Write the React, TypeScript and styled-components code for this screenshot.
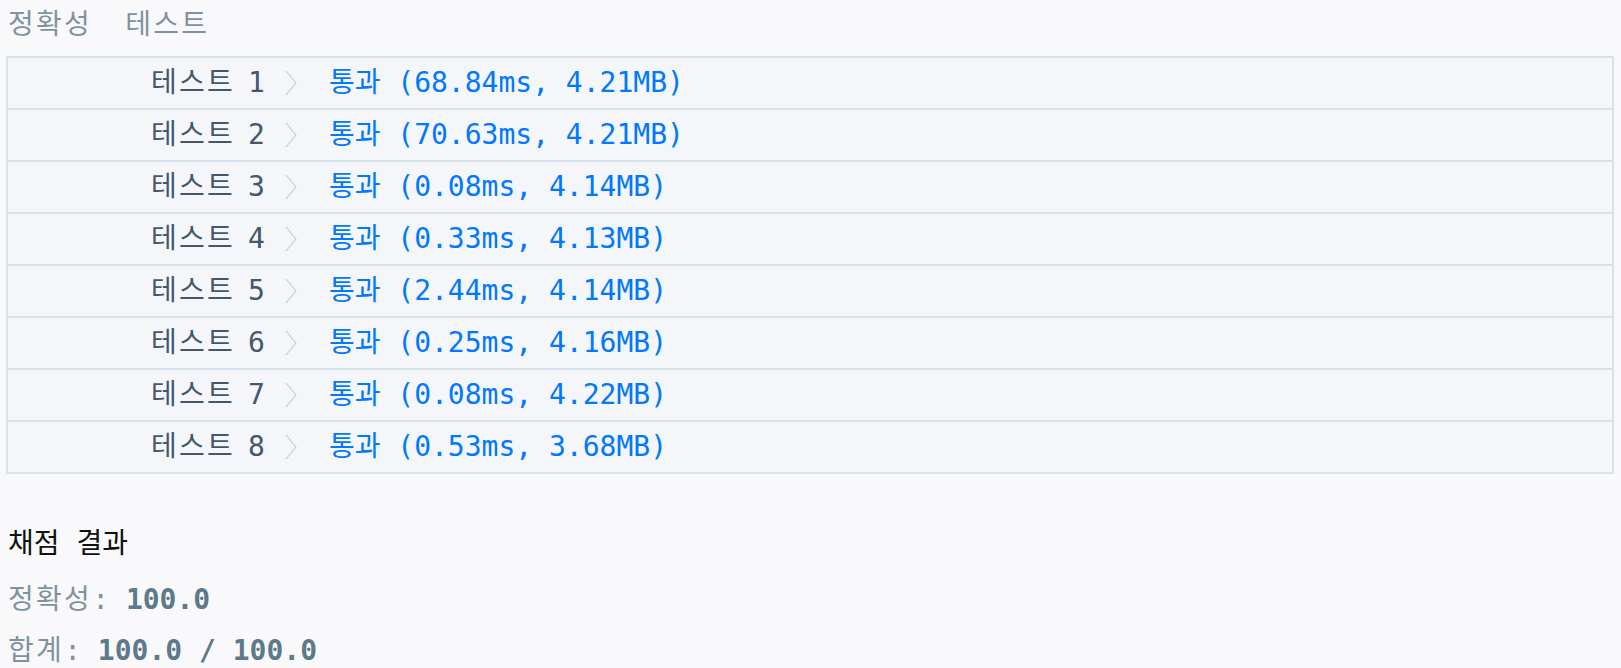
import React from "react";
import styled, { createGlobalStyle } from "styled-components";

const GlobalStyle = createGlobalStyle`
  html, body {
    margin: 0;
    padding: 0;
    background: #f9f9fc;
  }
  body {
    font-family: "DejaVu Sans Mono", "Noto Sans CJK KR", monospace;
  }
`;

const Page = styled.div`
  padding: 0 7px 0 6px;
  font-size: 28px;
`;

const Tabs = styled.div`
  display: flex;
  align-items: center;
  gap: 33px;
  height: 50px;
  padding-left: 2px;
  margin-bottom: 6px;
`;

const Tab = styled.span`
  color: #7f939f;
  line-height: 1;
  letter-spacing: 2.3px;
`;

const Table = styled.div`
  border: 2px solid #d7e2eb;
  border-bottom: none;
  background: #f5f6fa;
`;

const Row = styled.div`
  display: flex;
  align-items: center;
  box-sizing: border-box;
  height: 52px;
  padding: 0 0 1px 143px;
  border-bottom: 2px solid #d7e2eb;
`;

const TestName = styled.span`
  color: #44576c;
  white-space: pre;
  line-height: 1;
`;

const Spaced = styled.span<{ $tight?: boolean }>`
  letter-spacing: 2.3px;
  margin-right: ${(p) => (p.$tight ? "-4px" : "0")};
`;

const Chevron = styled.svg`
  display: block;
  margin: 0 32px 0 20px;
  flex: none;
`;

const Result = styled.span`
  color: #0078ff;
  white-space: pre;
  line-height: 1;
`;

const Summary = styled.div`
  padding: 52px 2px 0 2px;
`;

const Heading = styled.div`
  color: #111;
  height: 36px;
  line-height: 36px;
  margin-bottom: 13px;
  white-space: pre;
`;

const Line = styled.div`
  height: 51px;
  line-height: 50px;
  color: #7f939f;
  white-space: pre;
`;

const Num = styled.span`
  color: #5d7a8a;
  font-weight: bold;
`;

const tests = [
  "(68.84ms, 4.21MB)",
  "(70.63ms, 4.21MB)",
  "(0.08ms, 4.14MB)",
  "(0.33ms, 4.13MB)",
  "(2.44ms, 4.14MB)",
  "(0.25ms, 4.16MB)",
  "(0.08ms, 4.22MB)",
  "(0.53ms, 3.68MB)",
];

export default function App() {
  return (
    <>
      <GlobalStyle />
      <Page>
        <Tabs>
          <Tab>정확성</Tab>
          <Tab>테스트</Tab>
        </Tabs>
        <Table>
          {tests.map((t, i) => (
            <Row key={i}>
              <TestName>
                <Spaced $tight>테스트</Spaced> {i + 1}
              </TestName>
              <Chevron width="12" height="26" viewBox="0 0 12 26">
                <polyline points="1,1 11,13 1,25" fill="none" stroke="#cdd3da" strokeWidth="1.2" />
              </Chevron>
              <Result>통과 {t}</Result>
            </Row>
          ))}
        </Table>
        <Summary>
          <Heading>채점 결과</Heading>
          <Line>
            <Spaced>정확성</Spaced>: <Num>100.0</Num>
          </Line>
          <Line>
            <Spaced>합계</Spaced>: <Num>100.0 / 100.0</Num>
          </Line>
        </Summary>
      </Page>
    </>
  );
}
